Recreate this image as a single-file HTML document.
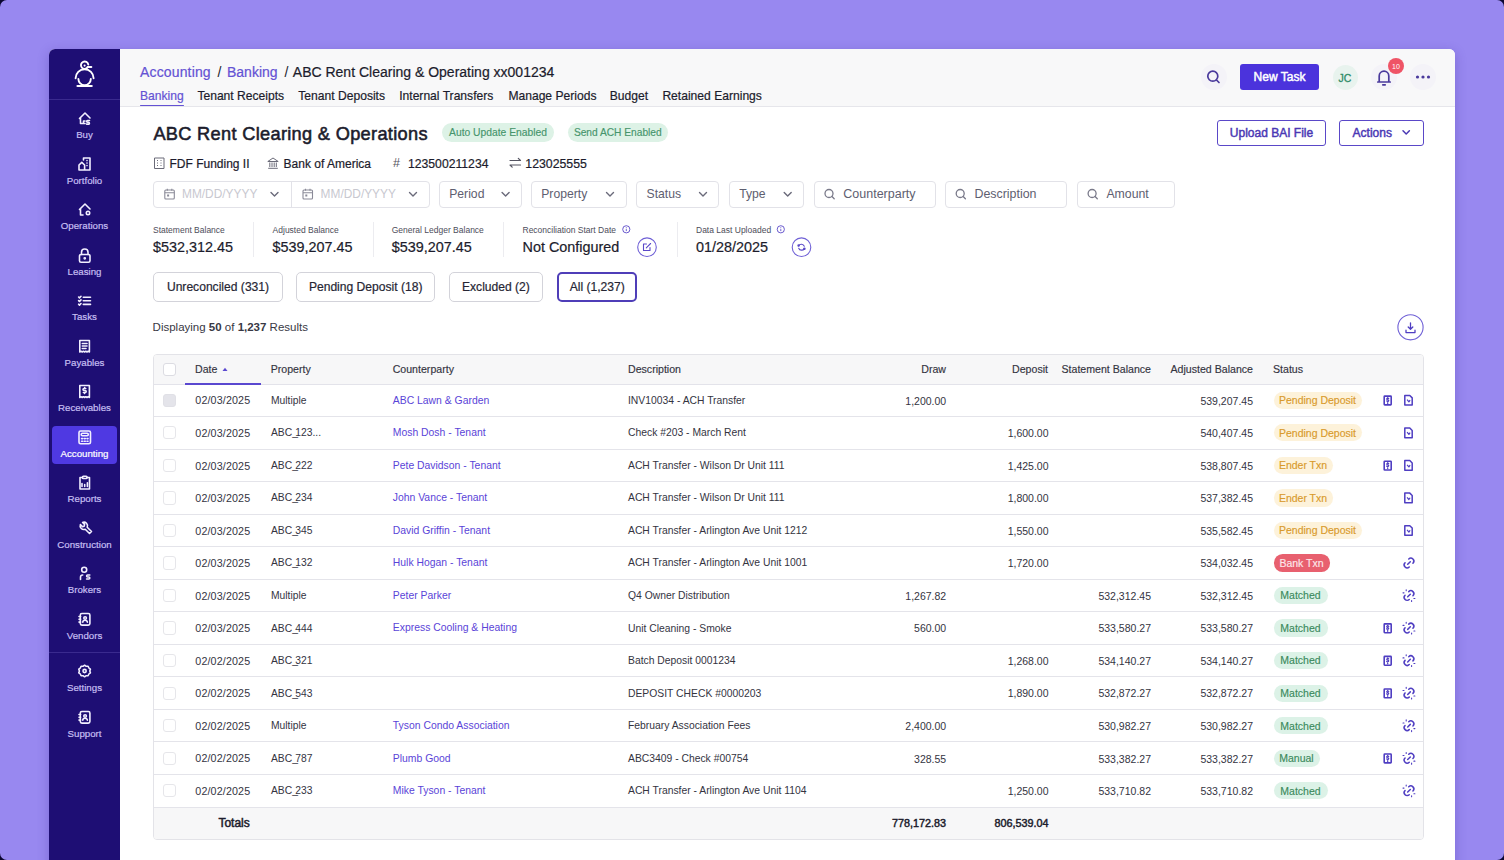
<!DOCTYPE html>
<html><head><meta charset="utf-8">
<style>
*{box-sizing:border-box;margin:0;padding:0}
html,body{width:1504px;height:860px;overflow:hidden}
body{background:#0b0630;font-family:"Liberation Sans",sans-serif;position:relative}
.t{position:absolute;white-space:nowrap}
.r{position:absolute}
b{font-weight:700}
svg.ov{position:absolute;left:0;top:0}
</style></head><body>
<div class="r" style="left:0;top:0;width:1504px;height:860px;border-radius:7px;background:#9888f0"></div>
<div class="r" style="left:49.00px;top:49.00px;width:1406.00px;height:831.00px;background:#ffffff;border-radius:6px;box-shadow:0 3px 12px rgba(50,30,140,.28);overflow:hidden"></div>
<div class="r" style="left:49.00px;top:49.00px;width:71.00px;height:811.00px;background:#1e0e74;border-top-left-radius:6px"></div>
<div class="r" style="left:49.00px;top:99.00px;width:71.00px;height:1.00px;background:#3a2a8e;"></div>
<div class="r" style="left:49.00px;top:652.00px;width:71.00px;height:1.00px;background:#3a2a8e;"></div>
<div class="r" style="left:120.00px;top:49.00px;width:1335.00px;height:57.00px;background:#f8f8f9;border-top-right-radius:6px"></div>
<div class="r" style="left:120.00px;top:106.00px;width:1335.00px;height:1.00px;background:#e6e6eb;"></div>
<div class="t" style="left:-215.50px;width:600px;text-align:center;top:130.29px;font-size:9.7px;line-height:9.7px;color:#c6bff2;-webkit-text-stroke:0.2px #c6bff2;">Buy</div>
<div class="t" style="left:-215.50px;width:600px;text-align:center;top:175.79px;font-size:9.7px;line-height:9.7px;color:#c6bff2;-webkit-text-stroke:0.2px #c6bff2;">Portfolio</div>
<div class="t" style="left:-215.50px;width:600px;text-align:center;top:221.29px;font-size:9.7px;line-height:9.7px;color:#c6bff2;-webkit-text-stroke:0.2px #c6bff2;">Operations</div>
<div class="t" style="left:-215.50px;width:600px;text-align:center;top:266.79px;font-size:9.7px;line-height:9.7px;color:#c6bff2;-webkit-text-stroke:0.2px #c6bff2;">Leasing</div>
<div class="t" style="left:-215.50px;width:600px;text-align:center;top:312.29px;font-size:9.7px;line-height:9.7px;color:#c6bff2;-webkit-text-stroke:0.2px #c6bff2;">Tasks</div>
<div class="t" style="left:-215.50px;width:600px;text-align:center;top:357.79px;font-size:9.7px;line-height:9.7px;color:#c6bff2;-webkit-text-stroke:0.2px #c6bff2;">Payables</div>
<div class="t" style="left:-215.50px;width:600px;text-align:center;top:403.29px;font-size:9.7px;line-height:9.7px;color:#c6bff2;-webkit-text-stroke:0.2px #c6bff2;">Receivables</div>
<div class="r" style="left:52.00px;top:425.50px;width:65.00px;height:38.00px;background:#4f39e2;border-radius:4px;"></div>
<div class="t" style="left:-215.50px;width:600px;text-align:center;top:448.79px;font-size:9.7px;line-height:9.7px;color:#ffffff;-webkit-text-stroke:0.2px #ffffff;">Accounting</div>
<div class="t" style="left:-215.50px;width:600px;text-align:center;top:494.29px;font-size:9.7px;line-height:9.7px;color:#c6bff2;-webkit-text-stroke:0.2px #c6bff2;">Reports</div>
<div class="t" style="left:-215.50px;width:600px;text-align:center;top:539.79px;font-size:9.7px;line-height:9.7px;color:#c6bff2;-webkit-text-stroke:0.2px #c6bff2;">Construction</div>
<div class="t" style="left:-215.50px;width:600px;text-align:center;top:585.29px;font-size:9.7px;line-height:9.7px;color:#c6bff2;-webkit-text-stroke:0.2px #c6bff2;">Brokers</div>
<div class="t" style="left:-215.50px;width:600px;text-align:center;top:630.79px;font-size:9.7px;line-height:9.7px;color:#c6bff2;-webkit-text-stroke:0.2px #c6bff2;">Vendors</div>
<div class="t" style="left:-215.50px;width:600px;text-align:center;top:683.29px;font-size:9.7px;line-height:9.7px;color:#c6bff2;-webkit-text-stroke:0.2px #c6bff2;">Settings</div>
<div class="t" style="left:-215.50px;width:600px;text-align:center;top:729.29px;font-size:9.7px;line-height:9.7px;color:#c6bff2;-webkit-text-stroke:0.2px #c6bff2;">Support</div>
<div class="t" style="left:140.00px;top:65.15px;font-size:14px;line-height:14px;color:#6452d4;-webkit-text-stroke:0.2px #6452d4;letter-spacing:.15px">Accounting</div>
<div class="t" style="left:217.50px;top:65.15px;font-size:14px;line-height:14px;color:#1c1c2c;">/</div>
<div class="t" style="left:227.00px;top:65.15px;font-size:14px;line-height:14px;color:#6452d4;-webkit-text-stroke:0.2px #6452d4;">Banking</div>
<div class="t" style="left:284.50px;top:65.15px;font-size:14px;line-height:14px;color:#1c1c2c;">/</div>
<div class="t" style="left:292.80px;top:65.15px;font-size:14px;line-height:14px;color:#1c1c2c;-webkit-text-stroke:0.2px #1c1c2c;">ABC Rent Clearing &amp; Operating xx001234</div>
<div class="t" style="left:140.00px;top:89.86px;font-size:12.1px;line-height:12.1px;color:#6452d4;-webkit-text-stroke:0.2px #6452d4;">Banking</div>
<div class="t" style="left:197.40px;top:89.86px;font-size:12.1px;line-height:12.1px;color:#1c1c2c;-webkit-text-stroke:0.2px #1c1c2c;">Tenant Receipts</div>
<div class="t" style="left:298.30px;top:89.86px;font-size:12.1px;line-height:12.1px;color:#1c1c2c;-webkit-text-stroke:0.2px #1c1c2c;">Tenant Deposits</div>
<div class="t" style="left:399.20px;top:89.86px;font-size:12.1px;line-height:12.1px;color:#1c1c2c;-webkit-text-stroke:0.2px #1c1c2c;">Internal Transfers</div>
<div class="t" style="left:508.40px;top:89.86px;font-size:12.1px;line-height:12.1px;color:#1c1c2c;-webkit-text-stroke:0.2px #1c1c2c;">Manage Periods</div>
<div class="t" style="left:609.80px;top:89.86px;font-size:12.1px;line-height:12.1px;color:#1c1c2c;-webkit-text-stroke:0.2px #1c1c2c;">Budget</div>
<div class="t" style="left:662.40px;top:89.86px;font-size:12.1px;line-height:12.1px;color:#1c1c2c;-webkit-text-stroke:0.2px #1c1c2c;">Retained Earnings</div>
<div class="r" style="left:140.00px;top:104.60px;width:44.00px;height:1.80px;background:#6452d4;border-radius:1px;"></div>
<div class="r" style="left:1201.00px;top:64.00px;width:26.00px;height:26.00px;background:#f4f3f8;border-radius:13px;"></div>
<div class="r" style="left:1240.00px;top:64.00px;width:79.00px;height:26.00px;background:#4b33dc;border-radius:3px;"></div>
<div class="t" style="left:979.50px;width:600px;text-align:center;top:71.34px;font-size:12px;line-height:12px;color:#fff;-webkit-text-stroke:0.45px #fff;">New Task</div>
<div class="r" style="left:1332.50px;top:65.00px;width:25.00px;height:25.00px;background:#e8f3ee;border-radius:13px;"></div>
<div class="t" style="left:1045.00px;width:600px;text-align:center;top:72.61px;font-size:10.5px;line-height:10.5px;color:#2f8c68;-webkit-text-stroke:0.3px #2f8c68;">JC</div>
<div class="r" style="left:1371.00px;top:64.00px;width:26.00px;height:26.00px;background:#f4f3f8;border-radius:13px;"></div>
<div class="r" style="left:1388.00px;top:58.00px;width:16.00px;height:16.00px;background:#ef5466;border-radius:8px;"></div>
<div class="t" style="left:1096.00px;width:600px;text-align:center;top:62.57px;font-size:7px;line-height:7px;color:#fff;">10</div>
<div class="r" style="left:1410.00px;top:64.00px;width:26.00px;height:26.00px;background:#f4f3f8;border-radius:13px;"></div>
<div class="t" style="left:153.40px;top:124.79px;font-size:18.2px;line-height:18.2px;color:#1c1c2c;letter-spacing:0.32px;-webkit-text-stroke:0.55px #1c1c2c;">ABC Rent Clearing &amp; Operations</div>
<div class="r" style="left:442.00px;top:123.00px;width:112.00px;height:19.00px;background:#ddf2e6;border-radius:9.5px;"></div>
<div class="t" style="left:198.00px;width:600px;text-align:center;top:127.78px;font-size:10.3px;line-height:10.3px;color:#46956c;-webkit-text-stroke:0.15px #46956c;">Auto Update Enabled</div>
<div class="r" style="left:567.50px;top:123.00px;width:100.50px;height:19.00px;background:#ddf2e6;border-radius:9.5px;"></div>
<div class="t" style="left:317.80px;width:600px;text-align:center;top:127.87px;font-size:10.2px;line-height:10.2px;color:#46956c;-webkit-text-stroke:0.15px #46956c;">Send ACH Enabled</div>
<div class="r" style="left:1217.00px;top:119.50px;width:109.00px;height:26.50px;background:#fff;border:1px solid #5a48c8;border-radius:3px;"></div>
<div class="t" style="left:971.50px;width:600px;text-align:center;top:126.64px;font-size:12px;line-height:12px;color:#4a38b4;-webkit-text-stroke:0.45px #4a38b4;">Upload BAI File</div>
<div class="r" style="left:1339.00px;top:119.50px;width:84.50px;height:26.50px;background:#fff;border:1px solid #5a48c8;border-radius:3px;"></div>
<div class="t" style="left:1352.60px;top:126.64px;font-size:12px;line-height:12px;color:#4a38b4;-webkit-text-stroke:0.45px #4a38b4;">Actions</div>
<div class="t" style="left:169.50px;top:157.84px;font-size:12px;line-height:12px;color:#1c1c2c;-webkit-text-stroke:0.2px #1c1c2c;">FDF Funding II</div>
<div class="t" style="left:283.60px;top:157.84px;font-size:12px;line-height:12px;color:#1c1c2c;-webkit-text-stroke:0.2px #1c1c2c;">Bank of America</div>
<div class="t" style="left:408.00px;top:157.67px;font-size:12.2px;line-height:12.2px;color:#1c1c2c;-webkit-text-stroke:0.2px #1c1c2c;">123500211234</div>
<div class="t" style="left:525.30px;top:157.59px;font-size:12.3px;line-height:12.3px;color:#1c1c2c;-webkit-text-stroke:0.2px #1c1c2c;">123025555</div>
<div class="t" style="left:393.00px;top:157.42px;font-size:12.5px;line-height:12.5px;color:#555562;">#</div>
<div class="r" style="left:153.00px;top:181.00px;width:276.50px;height:26.50px;background:#fff;border:1px solid #e2e2e8;border-radius:4px;"></div>
<div class="r" style="left:290.50px;top:181.00px;width:1.00px;height:26.50px;background:#e2e2e8;"></div>
<div class="t" style="left:182.00px;top:188.53px;font-size:11.9px;line-height:11.9px;color:#c8c8d0;">MM/DD/YYYY</div>
<div class="t" style="left:320.60px;top:188.53px;font-size:11.9px;line-height:11.9px;color:#c8c8d0;">MM/DD/YYYY</div>
<div class="r" style="left:439.00px;top:181.00px;width:82.60px;height:26.50px;background:#fff;border:1px solid #e2e2e8;border-radius:4px;"></div>
<div class="t" style="left:449.20px;top:188.27px;font-size:12.2px;line-height:12.2px;color:#5e5e70;">Period</div>
<div class="r" style="left:531.00px;top:181.00px;width:95.60px;height:26.50px;background:#fff;border:1px solid #e2e2e8;border-radius:4px;"></div>
<div class="t" style="left:541.20px;top:188.27px;font-size:12.2px;line-height:12.2px;color:#5e5e70;">Property</div>
<div class="r" style="left:636.30px;top:181.00px;width:83.20px;height:26.50px;background:#fff;border:1px solid #e2e2e8;border-radius:4px;"></div>
<div class="t" style="left:646.50px;top:188.27px;font-size:12.2px;line-height:12.2px;color:#5e5e70;">Status</div>
<div class="r" style="left:729.00px;top:181.00px;width:75.00px;height:26.50px;background:#fff;border:1px solid #e2e2e8;border-radius:4px;"></div>
<div class="t" style="left:739.20px;top:188.27px;font-size:12.2px;line-height:12.2px;color:#5e5e70;">Type</div>
<div class="r" style="left:813.80px;top:181.00px;width:122.00px;height:26.50px;background:#fff;border:1px solid #e2e2e8;border-radius:4px;"></div>
<div class="t" style="left:843.30px;top:188.02px;font-size:12.5px;line-height:12.5px;color:#5e5e70;">Counterparty</div>
<div class="r" style="left:945.00px;top:181.00px;width:122.40px;height:26.50px;background:#fff;border:1px solid #e2e2e8;border-radius:4px;"></div>
<div class="t" style="left:974.50px;top:188.10px;font-size:12.4px;line-height:12.4px;color:#5e5e70;">Description</div>
<div class="r" style="left:1076.90px;top:181.00px;width:98.00px;height:26.50px;background:#fff;border:1px solid #e2e2e8;border-radius:4px;"></div>
<div class="t" style="left:1106.40px;top:188.19px;font-size:12.3px;line-height:12.3px;color:#5e5e70;">Amount</div>
<div class="t" style="left:153.00px;top:225.90px;font-size:8.5px;line-height:8.5px;color:#4d4d5a;">Statement Balance</div>
<div class="t" style="left:153.00px;top:240.01px;font-size:14.4px;line-height:14.4px;color:#1c1c2c;-webkit-text-stroke:0.2px #1c1c2c;">$532,312.45</div>
<div class="t" style="left:272.60px;top:225.90px;font-size:8.5px;line-height:8.5px;color:#4d4d5a;">Adjusted Balance</div>
<div class="t" style="left:272.60px;top:240.01px;font-size:14.4px;line-height:14.4px;color:#1c1c2c;-webkit-text-stroke:0.2px #1c1c2c;">$539,207.45</div>
<div class="t" style="left:391.70px;top:225.90px;font-size:8.5px;line-height:8.5px;color:#4d4d5a;">General Ledger Balance</div>
<div class="t" style="left:391.70px;top:240.01px;font-size:14.4px;line-height:14.4px;color:#1c1c2c;-webkit-text-stroke:0.2px #1c1c2c;">$539,207.45</div>
<div class="t" style="left:522.50px;top:225.90px;font-size:8.5px;line-height:8.5px;color:#4d4d5a;">Reconciliation Start Date</div>
<div class="t" style="left:522.50px;top:240.01px;font-size:14.4px;line-height:14.4px;color:#1c1c2c;-webkit-text-stroke:0.2px #1c1c2c;">Not Configured</div>
<div class="t" style="left:696.00px;top:225.90px;font-size:8.5px;line-height:8.5px;color:#4d4d5a;">Data Last Uploaded</div>
<div class="t" style="left:696.00px;top:240.01px;font-size:14.4px;line-height:14.4px;color:#1c1c2c;-webkit-text-stroke:0.2px #1c1c2c;">01/28/2025</div>
<div class="r" style="left:253.00px;top:222.00px;width:1.00px;height:35.00px;background:#ececf0;"></div>
<div class="r" style="left:372.70px;top:222.00px;width:1.00px;height:35.00px;background:#ececf0;"></div>
<div class="r" style="left:503.00px;top:222.00px;width:1.00px;height:35.00px;background:#ececf0;"></div>
<div class="r" style="left:676.50px;top:222.00px;width:1.00px;height:35.00px;background:#ececf0;"></div>
<div class="r" style="left:153.00px;top:272.20px;width:130.00px;height:29.60px;background:#fff;border:1px solid #d3d3da;border-radius:5px;"></div>
<div class="t" style="left:-82.00px;width:600px;text-align:center;top:280.96px;font-size:12.1px;line-height:12.1px;color:#262634;-webkit-text-stroke:0.2px #262634;">Unreconciled (331)</div>
<div class="r" style="left:295.90px;top:272.20px;width:139.60px;height:29.60px;background:#fff;border:1px solid #d3d3da;border-radius:5px;"></div>
<div class="t" style="left:65.70px;width:600px;text-align:center;top:280.96px;font-size:12.1px;line-height:12.1px;color:#262634;-webkit-text-stroke:0.2px #262634;">Pending Deposit (18)</div>
<div class="r" style="left:448.50px;top:272.20px;width:94.90px;height:29.60px;background:#fff;border:1px solid #d3d3da;border-radius:5px;"></div>
<div class="t" style="left:195.95px;width:600px;text-align:center;top:280.96px;font-size:12.1px;line-height:12.1px;color:#262634;-webkit-text-stroke:0.2px #262634;">Excluded (2)</div>
<div class="r" style="left:557.40px;top:272.20px;width:79.60px;height:29.60px;background:#fff;border:2px solid #4f3eb8;border-radius:5px;"></div>
<div class="t" style="left:297.20px;width:600px;text-align:center;top:280.96px;font-size:12.1px;line-height:12.1px;color:#262634;-webkit-text-stroke:0.2px #262634;">All (1,237)</div>
<div class="t" style="left:152.60px;top:322.47px;font-size:11.5px;line-height:11.5px;color:#383844;">Displaying <b>50</b> of <b>1,237</b> Results</div>
<div class="r" style="left:153.00px;top:354.00px;width:1270.80px;height:485.50px;background:#fff;border:1px solid #e3e3e8;border-radius:4px;"></div>
<div class="r" style="left:154.00px;top:355.00px;width:1268.80px;height:29.00px;background:#f7f7f8;border-top-left-radius:3px;border-top-right-radius:3px"></div>
<div class="r" style="left:154.00px;top:384.00px;width:1268.80px;height:1.00px;background:#e3e3ea;"></div>
<div class="r" style="left:185.40px;top:382.50px;width:75.60px;height:2.00px;background:#5a48d0;"></div>
<div class="r" style="left:162.60px;top:362.80px;width:13.20px;height:13.20px;background:#fff;border:1px solid #dcdce2;border-radius:3px;"></div>
<div class="t" style="left:195.00px;top:364.03px;font-size:10.6px;line-height:10.6px;color:#34343f;-webkit-text-stroke:0.15px #34343f;">Date</div>
<div class="t" style="left:270.70px;top:364.03px;font-size:10.6px;line-height:10.6px;color:#34343f;-webkit-text-stroke:0.15px #34343f;">Property</div>
<div class="t" style="left:392.70px;top:364.03px;font-size:10.6px;line-height:10.6px;color:#34343f;-webkit-text-stroke:0.15px #34343f;">Counterparty</div>
<div class="t" style="left:628.00px;top:364.03px;font-size:10.6px;line-height:10.6px;color:#34343f;-webkit-text-stroke:0.15px #34343f;">Description</div>
<div class="t" style="left:346.00px;width:600px;text-align:right;top:364.03px;font-size:10.6px;line-height:10.6px;color:#34343f;-webkit-text-stroke:0.15px #34343f;">Draw</div>
<div class="t" style="left:448.00px;width:600px;text-align:right;top:364.03px;font-size:10.6px;line-height:10.6px;color:#34343f;-webkit-text-stroke:0.15px #34343f;">Deposit</div>
<div class="t" style="left:551.00px;width:600px;text-align:right;top:364.03px;font-size:10.6px;line-height:10.6px;color:#34343f;-webkit-text-stroke:0.15px #34343f;">Statement Balance</div>
<div class="t" style="left:653.00px;width:600px;text-align:right;top:364.03px;font-size:10.6px;line-height:10.6px;color:#34343f;-webkit-text-stroke:0.15px #34343f;">Adjusted Balance</div>
<div class="t" style="left:1273.00px;top:364.03px;font-size:10.6px;line-height:10.6px;color:#34343f;-webkit-text-stroke:0.15px #34343f;">Status</div>
<div class="r" style="left:154.00px;top:416.00px;width:1268.80px;height:1.00px;background:#e4e4ea;"></div>
<div class="r" style="left:162.60px;top:393.70px;width:13.20px;height:13.20px;background:#e4e4ea;border:1px solid #e0e0e6;border-radius:3px;"></div>
<div class="t" style="left:195.30px;top:395.44px;font-size:10.7px;line-height:10.7px;color:#34343f;letter-spacing:0.15px;">02/03/2025</div>
<div class="t" style="left:271.00px;top:395.78px;font-size:10.3px;line-height:10.3px;color:#34343f;">Multiple</div>
<div class="t" style="left:392.80px;top:395.70px;font-size:10.4px;line-height:10.4px;color:#5a44d8;">ABC Lawn &amp; Garden</div>
<div class="t" style="left:628.00px;top:395.74px;font-size:10.35px;line-height:10.35px;color:#34343f;">INV10034 - ACH Transfer</div>
<div class="t" style="left:346.20px;width:600px;text-align:right;top:395.61px;font-size:10.5px;line-height:10.5px;color:#34343f;">1,200.00</div>
<div class="t" style="left:653.00px;width:600px;text-align:right;top:395.61px;font-size:10.5px;line-height:10.5px;color:#34343f;">539,207.45</div>
<div class="r" style="left:1273.50px;top:391.70px;width:88.00px;height:17.20px;background:#fdf2da;border-radius:8.6px;"></div>
<div class="t" style="left:1017.50px;width:600px;text-align:center;top:395.11px;font-size:10.5px;line-height:10.5px;color:#d99a2b;-webkit-text-stroke:0.15px #d99a2b;">Pending Deposit</div>
<div class="r" style="left:154.00px;top:448.54px;width:1268.80px;height:1.00px;background:#e4e4ea;"></div>
<div class="r" style="left:162.60px;top:426.24px;width:13.20px;height:13.20px;background:#fff;border:1px solid #e6e6ea;border-radius:3px;"></div>
<div class="t" style="left:195.30px;top:427.98px;font-size:10.7px;line-height:10.7px;color:#34343f;letter-spacing:0.15px;">02/03/2025</div>
<div class="t" style="left:271.00px;top:428.32px;font-size:10.3px;line-height:10.3px;color:#34343f;">ABC<span style="letter-spacing:-2.6px">_</span>123...</div>
<div class="t" style="left:392.80px;top:428.24px;font-size:10.4px;line-height:10.4px;color:#5a44d8;">Mosh Dosh - Tenant</div>
<div class="t" style="left:628.00px;top:428.28px;font-size:10.35px;line-height:10.35px;color:#34343f;">Check #203 - March Rent</div>
<div class="t" style="left:448.50px;width:600px;text-align:right;top:428.15px;font-size:10.5px;line-height:10.5px;color:#34343f;">1,600.00</div>
<div class="t" style="left:653.00px;width:600px;text-align:right;top:428.15px;font-size:10.5px;line-height:10.5px;color:#34343f;">540,407.45</div>
<div class="r" style="left:1273.50px;top:424.24px;width:88.00px;height:17.20px;background:#fdf2da;border-radius:8.6px;"></div>
<div class="t" style="left:1017.50px;width:600px;text-align:center;top:427.65px;font-size:10.5px;line-height:10.5px;color:#d99a2b;-webkit-text-stroke:0.15px #d99a2b;">Pending Deposit</div>
<div class="r" style="left:154.00px;top:481.08px;width:1268.80px;height:1.00px;background:#e4e4ea;"></div>
<div class="r" style="left:162.60px;top:458.78px;width:13.20px;height:13.20px;background:#fff;border:1px solid #e6e6ea;border-radius:3px;"></div>
<div class="t" style="left:195.30px;top:460.52px;font-size:10.7px;line-height:10.7px;color:#34343f;letter-spacing:0.15px;">02/03/2025</div>
<div class="t" style="left:271.00px;top:460.86px;font-size:10.3px;line-height:10.3px;color:#34343f;">ABC<span style="letter-spacing:-2.6px">_</span>222</div>
<div class="t" style="left:392.80px;top:460.78px;font-size:10.4px;line-height:10.4px;color:#5a44d8;">Pete Davidson - Tenant</div>
<div class="t" style="left:628.00px;top:460.82px;font-size:10.35px;line-height:10.35px;color:#34343f;">ACH Transfer - Wilson Dr Unit 111</div>
<div class="t" style="left:448.50px;width:600px;text-align:right;top:460.69px;font-size:10.5px;line-height:10.5px;color:#34343f;">1,425.00</div>
<div class="t" style="left:653.00px;width:600px;text-align:right;top:460.69px;font-size:10.5px;line-height:10.5px;color:#34343f;">538,807.45</div>
<div class="r" style="left:1273.50px;top:456.78px;width:59.00px;height:17.20px;background:#fdf2da;border-radius:8.6px;"></div>
<div class="t" style="left:1003.00px;width:600px;text-align:center;top:460.19px;font-size:10.5px;line-height:10.5px;color:#d99a2b;-webkit-text-stroke:0.15px #d99a2b;">Ender Txn</div>
<div class="r" style="left:154.00px;top:513.62px;width:1268.80px;height:1.00px;background:#e4e4ea;"></div>
<div class="r" style="left:162.60px;top:491.32px;width:13.20px;height:13.20px;background:#fff;border:1px solid #e6e6ea;border-radius:3px;"></div>
<div class="t" style="left:195.30px;top:493.06px;font-size:10.7px;line-height:10.7px;color:#34343f;letter-spacing:0.15px;">02/03/2025</div>
<div class="t" style="left:271.00px;top:493.40px;font-size:10.3px;line-height:10.3px;color:#34343f;">ABC<span style="letter-spacing:-2.6px">_</span>234</div>
<div class="t" style="left:392.80px;top:493.32px;font-size:10.4px;line-height:10.4px;color:#5a44d8;">John Vance - Tenant</div>
<div class="t" style="left:628.00px;top:493.36px;font-size:10.35px;line-height:10.35px;color:#34343f;">ACH Transfer - Wilson Dr Unit 111</div>
<div class="t" style="left:448.50px;width:600px;text-align:right;top:493.23px;font-size:10.5px;line-height:10.5px;color:#34343f;">1,800.00</div>
<div class="t" style="left:653.00px;width:600px;text-align:right;top:493.23px;font-size:10.5px;line-height:10.5px;color:#34343f;">537,382.45</div>
<div class="r" style="left:1273.50px;top:489.32px;width:59.00px;height:17.20px;background:#fdf2da;border-radius:8.6px;"></div>
<div class="t" style="left:1003.00px;width:600px;text-align:center;top:492.73px;font-size:10.5px;line-height:10.5px;color:#d99a2b;-webkit-text-stroke:0.15px #d99a2b;">Ender Txn</div>
<div class="r" style="left:154.00px;top:546.16px;width:1268.80px;height:1.00px;background:#e4e4ea;"></div>
<div class="r" style="left:162.60px;top:523.86px;width:13.20px;height:13.20px;background:#fff;border:1px solid #e6e6ea;border-radius:3px;"></div>
<div class="t" style="left:195.30px;top:525.60px;font-size:10.7px;line-height:10.7px;color:#34343f;letter-spacing:0.15px;">02/03/2025</div>
<div class="t" style="left:271.00px;top:525.94px;font-size:10.3px;line-height:10.3px;color:#34343f;">ABC<span style="letter-spacing:-2.6px">_</span>345</div>
<div class="t" style="left:392.80px;top:525.86px;font-size:10.4px;line-height:10.4px;color:#5a44d8;">David Griffin - Tenant</div>
<div class="t" style="left:628.00px;top:525.90px;font-size:10.35px;line-height:10.35px;color:#34343f;">ACH Transfer - Arlington Ave Unit 1212</div>
<div class="t" style="left:448.50px;width:600px;text-align:right;top:525.77px;font-size:10.5px;line-height:10.5px;color:#34343f;">1,550.00</div>
<div class="t" style="left:653.00px;width:600px;text-align:right;top:525.77px;font-size:10.5px;line-height:10.5px;color:#34343f;">535,582.45</div>
<div class="r" style="left:1273.50px;top:521.86px;width:88.00px;height:17.20px;background:#fdf2da;border-radius:8.6px;"></div>
<div class="t" style="left:1017.50px;width:600px;text-align:center;top:525.27px;font-size:10.5px;line-height:10.5px;color:#d99a2b;-webkit-text-stroke:0.15px #d99a2b;">Pending Deposit</div>
<div class="r" style="left:154.00px;top:578.70px;width:1268.80px;height:1.00px;background:#e4e4ea;"></div>
<div class="r" style="left:162.60px;top:556.40px;width:13.20px;height:13.20px;background:#fff;border:1px solid #e6e6ea;border-radius:3px;"></div>
<div class="t" style="left:195.30px;top:558.14px;font-size:10.7px;line-height:10.7px;color:#34343f;letter-spacing:0.15px;">02/03/2025</div>
<div class="t" style="left:271.00px;top:558.48px;font-size:10.3px;line-height:10.3px;color:#34343f;">ABC<span style="letter-spacing:-2.6px">_</span>132</div>
<div class="t" style="left:392.80px;top:558.40px;font-size:10.4px;line-height:10.4px;color:#5a44d8;">Hulk Hogan - Tenant</div>
<div class="t" style="left:628.00px;top:558.44px;font-size:10.35px;line-height:10.35px;color:#34343f;">ACH Transfer - Arlington Ave Unit 1001</div>
<div class="t" style="left:448.50px;width:600px;text-align:right;top:558.31px;font-size:10.5px;line-height:10.5px;color:#34343f;">1,720.00</div>
<div class="t" style="left:653.00px;width:600px;text-align:right;top:558.31px;font-size:10.5px;line-height:10.5px;color:#34343f;">534,032.45</div>
<div class="r" style="left:1273.50px;top:554.40px;width:56.00px;height:17.20px;background:#e8606f;border-radius:8.6px;"></div>
<div class="t" style="left:1001.50px;width:600px;text-align:center;top:557.81px;font-size:10.5px;line-height:10.5px;color:#fde8ea;-webkit-text-stroke:0.15px #fde8ea;">Bank Txn</div>
<div class="r" style="left:154.00px;top:611.24px;width:1268.80px;height:1.00px;background:#e4e4ea;"></div>
<div class="r" style="left:162.60px;top:588.94px;width:13.20px;height:13.20px;background:#fff;border:1px solid #e6e6ea;border-radius:3px;"></div>
<div class="t" style="left:195.30px;top:590.68px;font-size:10.7px;line-height:10.7px;color:#34343f;letter-spacing:0.15px;">02/03/2025</div>
<div class="t" style="left:271.00px;top:591.02px;font-size:10.3px;line-height:10.3px;color:#34343f;">Multiple</div>
<div class="t" style="left:392.80px;top:590.94px;font-size:10.4px;line-height:10.4px;color:#5a44d8;">Peter Parker</div>
<div class="t" style="left:628.00px;top:590.98px;font-size:10.35px;line-height:10.35px;color:#34343f;">Q4 Owner Distribution</div>
<div class="t" style="left:346.20px;width:600px;text-align:right;top:590.85px;font-size:10.5px;line-height:10.5px;color:#34343f;">1,267.82</div>
<div class="t" style="left:551.00px;width:600px;text-align:right;top:590.85px;font-size:10.5px;line-height:10.5px;color:#34343f;">532,312.45</div>
<div class="t" style="left:653.00px;width:600px;text-align:right;top:590.85px;font-size:10.5px;line-height:10.5px;color:#34343f;">532,312.45</div>
<div class="r" style="left:1273.50px;top:586.94px;width:54.00px;height:17.20px;background:#dcf2e7;border-radius:8.6px;"></div>
<div class="t" style="left:1000.50px;width:600px;text-align:center;top:590.35px;font-size:10.5px;line-height:10.5px;color:#3b8a5d;-webkit-text-stroke:0.15px #3b8a5d;">Matched</div>
<div class="r" style="left:154.00px;top:643.78px;width:1268.80px;height:1.00px;background:#e4e4ea;"></div>
<div class="r" style="left:162.60px;top:621.48px;width:13.20px;height:13.20px;background:#fff;border:1px solid #e6e6ea;border-radius:3px;"></div>
<div class="t" style="left:195.30px;top:623.22px;font-size:10.7px;line-height:10.7px;color:#34343f;letter-spacing:0.15px;">02/03/2025</div>
<div class="t" style="left:271.00px;top:623.56px;font-size:10.3px;line-height:10.3px;color:#34343f;">ABC<span style="letter-spacing:-2.6px">_</span>444</div>
<div class="t" style="left:392.80px;top:623.48px;font-size:10.4px;line-height:10.4px;color:#5a44d8;">Express Cooling &amp; Heating</div>
<div class="t" style="left:628.00px;top:623.52px;font-size:10.35px;line-height:10.35px;color:#34343f;">Unit Cleaning - Smoke</div>
<div class="t" style="left:346.20px;width:600px;text-align:right;top:623.39px;font-size:10.5px;line-height:10.5px;color:#34343f;">560.00</div>
<div class="t" style="left:551.00px;width:600px;text-align:right;top:623.39px;font-size:10.5px;line-height:10.5px;color:#34343f;">533,580.27</div>
<div class="t" style="left:653.00px;width:600px;text-align:right;top:623.39px;font-size:10.5px;line-height:10.5px;color:#34343f;">533,580.27</div>
<div class="r" style="left:1273.50px;top:619.48px;width:54.00px;height:17.20px;background:#dcf2e7;border-radius:8.6px;"></div>
<div class="t" style="left:1000.50px;width:600px;text-align:center;top:622.89px;font-size:10.5px;line-height:10.5px;color:#3b8a5d;-webkit-text-stroke:0.15px #3b8a5d;">Matched</div>
<div class="r" style="left:154.00px;top:676.32px;width:1268.80px;height:1.00px;background:#e4e4ea;"></div>
<div class="r" style="left:162.60px;top:654.02px;width:13.20px;height:13.20px;background:#fff;border:1px solid #e6e6ea;border-radius:3px;"></div>
<div class="t" style="left:195.30px;top:655.76px;font-size:10.7px;line-height:10.7px;color:#34343f;letter-spacing:0.15px;">02/02/2025</div>
<div class="t" style="left:271.00px;top:656.10px;font-size:10.3px;line-height:10.3px;color:#34343f;">ABC<span style="letter-spacing:-2.6px">_</span>321</div>
<div class="t" style="left:628.00px;top:656.06px;font-size:10.35px;line-height:10.35px;color:#34343f;">Batch Deposit 0001234</div>
<div class="t" style="left:448.50px;width:600px;text-align:right;top:655.93px;font-size:10.5px;line-height:10.5px;color:#34343f;">1,268.00</div>
<div class="t" style="left:551.00px;width:600px;text-align:right;top:655.93px;font-size:10.5px;line-height:10.5px;color:#34343f;">534,140.27</div>
<div class="t" style="left:653.00px;width:600px;text-align:right;top:655.93px;font-size:10.5px;line-height:10.5px;color:#34343f;">534,140.27</div>
<div class="r" style="left:1273.50px;top:652.02px;width:54.00px;height:17.20px;background:#dcf2e7;border-radius:8.6px;"></div>
<div class="t" style="left:1000.50px;width:600px;text-align:center;top:655.43px;font-size:10.5px;line-height:10.5px;color:#3b8a5d;-webkit-text-stroke:0.15px #3b8a5d;">Matched</div>
<div class="r" style="left:154.00px;top:708.86px;width:1268.80px;height:1.00px;background:#e4e4ea;"></div>
<div class="r" style="left:162.60px;top:686.56px;width:13.20px;height:13.20px;background:#fff;border:1px solid #e6e6ea;border-radius:3px;"></div>
<div class="t" style="left:195.30px;top:688.30px;font-size:10.7px;line-height:10.7px;color:#34343f;letter-spacing:0.15px;">02/02/2025</div>
<div class="t" style="left:271.00px;top:688.64px;font-size:10.3px;line-height:10.3px;color:#34343f;">ABC<span style="letter-spacing:-2.6px">_</span>543</div>
<div class="t" style="left:628.00px;top:688.60px;font-size:10.35px;line-height:10.35px;color:#34343f;">DEPOSIT CHECK #0000203</div>
<div class="t" style="left:448.50px;width:600px;text-align:right;top:688.47px;font-size:10.5px;line-height:10.5px;color:#34343f;">1,890.00</div>
<div class="t" style="left:551.00px;width:600px;text-align:right;top:688.47px;font-size:10.5px;line-height:10.5px;color:#34343f;">532,872.27</div>
<div class="t" style="left:653.00px;width:600px;text-align:right;top:688.47px;font-size:10.5px;line-height:10.5px;color:#34343f;">532,872.27</div>
<div class="r" style="left:1273.50px;top:684.56px;width:54.00px;height:17.20px;background:#dcf2e7;border-radius:8.6px;"></div>
<div class="t" style="left:1000.50px;width:600px;text-align:center;top:687.97px;font-size:10.5px;line-height:10.5px;color:#3b8a5d;-webkit-text-stroke:0.15px #3b8a5d;">Matched</div>
<div class="r" style="left:154.00px;top:741.40px;width:1268.80px;height:1.00px;background:#e4e4ea;"></div>
<div class="r" style="left:162.60px;top:719.10px;width:13.20px;height:13.20px;background:#fff;border:1px solid #e6e6ea;border-radius:3px;"></div>
<div class="t" style="left:195.30px;top:720.84px;font-size:10.7px;line-height:10.7px;color:#34343f;letter-spacing:0.15px;">02/02/2025</div>
<div class="t" style="left:271.00px;top:721.18px;font-size:10.3px;line-height:10.3px;color:#34343f;">Multiple</div>
<div class="t" style="left:392.80px;top:721.10px;font-size:10.4px;line-height:10.4px;color:#5a44d8;">Tyson Condo Association</div>
<div class="t" style="left:628.00px;top:721.14px;font-size:10.35px;line-height:10.35px;color:#34343f;">February Association Fees</div>
<div class="t" style="left:346.20px;width:600px;text-align:right;top:721.01px;font-size:10.5px;line-height:10.5px;color:#34343f;">2,400.00</div>
<div class="t" style="left:551.00px;width:600px;text-align:right;top:721.01px;font-size:10.5px;line-height:10.5px;color:#34343f;">530,982.27</div>
<div class="t" style="left:653.00px;width:600px;text-align:right;top:721.01px;font-size:10.5px;line-height:10.5px;color:#34343f;">530,982.27</div>
<div class="r" style="left:1273.50px;top:717.10px;width:54.00px;height:17.20px;background:#dcf2e7;border-radius:8.6px;"></div>
<div class="t" style="left:1000.50px;width:600px;text-align:center;top:720.51px;font-size:10.5px;line-height:10.5px;color:#3b8a5d;-webkit-text-stroke:0.15px #3b8a5d;">Matched</div>
<div class="r" style="left:154.00px;top:773.94px;width:1268.80px;height:1.00px;background:#e4e4ea;"></div>
<div class="r" style="left:162.60px;top:751.64px;width:13.20px;height:13.20px;background:#fff;border:1px solid #e6e6ea;border-radius:3px;"></div>
<div class="t" style="left:195.30px;top:753.38px;font-size:10.7px;line-height:10.7px;color:#34343f;letter-spacing:0.15px;">02/02/2025</div>
<div class="t" style="left:271.00px;top:753.72px;font-size:10.3px;line-height:10.3px;color:#34343f;">ABC<span style="letter-spacing:-2.6px">_</span>787</div>
<div class="t" style="left:392.80px;top:753.64px;font-size:10.4px;line-height:10.4px;color:#5a44d8;">Plumb Good</div>
<div class="t" style="left:628.00px;top:753.68px;font-size:10.35px;line-height:10.35px;color:#34343f;">ABC3409 - Check #00754</div>
<div class="t" style="left:346.20px;width:600px;text-align:right;top:753.55px;font-size:10.5px;line-height:10.5px;color:#34343f;">328.55</div>
<div class="t" style="left:551.00px;width:600px;text-align:right;top:753.55px;font-size:10.5px;line-height:10.5px;color:#34343f;">533,382.27</div>
<div class="t" style="left:653.00px;width:600px;text-align:right;top:753.55px;font-size:10.5px;line-height:10.5px;color:#34343f;">533,382.27</div>
<div class="r" style="left:1273.50px;top:749.64px;width:46.00px;height:17.20px;background:#dcf2e7;border-radius:8.6px;"></div>
<div class="t" style="left:996.50px;width:600px;text-align:center;top:753.05px;font-size:10.5px;line-height:10.5px;color:#3b8a5d;-webkit-text-stroke:0.15px #3b8a5d;">Manual</div>
<div class="r" style="left:162.60px;top:784.18px;width:13.20px;height:13.20px;background:#fff;border:1px solid #e6e6ea;border-radius:3px;"></div>
<div class="t" style="left:195.30px;top:785.92px;font-size:10.7px;line-height:10.7px;color:#34343f;letter-spacing:0.15px;">02/02/2025</div>
<div class="t" style="left:271.00px;top:786.26px;font-size:10.3px;line-height:10.3px;color:#34343f;">ABC<span style="letter-spacing:-2.6px">_</span>233</div>
<div class="t" style="left:392.80px;top:786.18px;font-size:10.4px;line-height:10.4px;color:#5a44d8;">Mike Tyson - Tenant</div>
<div class="t" style="left:628.00px;top:786.22px;font-size:10.35px;line-height:10.35px;color:#34343f;">ACH Transfer - Arlington Ave Unit 1104</div>
<div class="t" style="left:448.50px;width:600px;text-align:right;top:786.09px;font-size:10.5px;line-height:10.5px;color:#34343f;">1,250.00</div>
<div class="t" style="left:551.00px;width:600px;text-align:right;top:786.09px;font-size:10.5px;line-height:10.5px;color:#34343f;">533,710.82</div>
<div class="t" style="left:653.00px;width:600px;text-align:right;top:786.09px;font-size:10.5px;line-height:10.5px;color:#34343f;">533,710.82</div>
<div class="r" style="left:1273.50px;top:782.18px;width:54.00px;height:17.20px;background:#dcf2e7;border-radius:8.6px;"></div>
<div class="t" style="left:1000.50px;width:600px;text-align:center;top:785.59px;font-size:10.5px;line-height:10.5px;color:#3b8a5d;-webkit-text-stroke:0.15px #3b8a5d;">Matched</div>
<div class="r" style="left:154.00px;top:807.00px;width:1268.80px;height:32.00px;background:#f7f7f8;border-bottom-left-radius:3px;border-bottom-right-radius:3px"></div>
<div class="r" style="left:154.00px;top:806.50px;width:1268.80px;height:1.00px;background:#e4e4ea;"></div>
<div class="t" style="left:218.40px;top:817.14px;font-size:12px;line-height:12px;color:#1c1c2c;-webkit-text-stroke:0.5px #1c1c2c;">Totals</div>
<div class="t" style="left:346.00px;width:600px;text-align:right;top:818.06px;font-size:10.8px;line-height:10.8px;color:#1c1c2c;-webkit-text-stroke:0.45px #1c1c2c;">778,172.83</div>
<div class="t" style="left:448.50px;width:600px;text-align:right;top:818.06px;font-size:10.8px;line-height:10.8px;color:#1c1c2c;-webkit-text-stroke:0.45px #1c1c2c;">806,539.04</div>
<svg class="ov" width="1504" height="860" viewBox="0 0 1504 860"><g fill="none" stroke="#fff" stroke-width="1.9" stroke-linecap="round"><path d="M87.6 67.4 A3.7 3.7 0 1 1 88.3 64.6"/><path d="M87.6 67.1 H91.3" stroke-width="2"/><path d="M75.6 78.2 A9 9 0 0 1 93.6 78.2"/><path d="M78.4 79 A6.2 6.2 0 0 0 90.8 79"/><path d="M77.5 86 H91.7" stroke-width="2.2"/></g><circle cx="84.6" cy="65.6" r="1.05" fill="#fff"/>
<g fill="none" stroke="#f2efff" stroke-width="1.6" stroke-linecap="round" stroke-linejoin="round"><path d="M79.5 118.5 L85 113 L90 118"/><path d="M80.5 118 V123.5 H83"/><path d="M85 121 h-1.5 v2.5 h1.5"/><path d="M89.5 120.5 h-2 a0.9 0.9 0 0 0 0 1.8 h1 a0.9 0.9 0 0 1 0 1.8 h-2"/><path d="M83.5 160 V158 H90 V170 H79 V165 L81.8 162.3 L84.6 165 V170"/><path d="M87 160.5v.1M87 163v.1M87 165.5v.1"/><path d="M79.5 209.5 L85 204 L90 209"/><path d="M80.5 209 V215 H83"/><circle cx="88" cy="213" r="1.7"/><rect x="79.5" y="254.5" width="10.5" height="7.7" rx="1.5"/><path d="M81.5 254.5 V252.3 a3.25 3.25 0 0 1 6.5 0 V254.5"/><circle cx="84.75" cy="258.3" r=".6" fill="#f2efff"/><path d="M78.6 297 l.9 .9 1.5-1.6M78.6 300.6 l.9 .9 1.5-1.6M78.6 304.2 l.9 .9 1.5-1.6"/><path d="M83.3 297.2 H90.5M83.3 300.8 H90.5M83.3 304.4 H90.5"/><path d="M79.8 352 V340.5 H89.4 V352 l-1.2 -.8 -1.2 .8 -1.2 -.8 -1.2 .8 -1.2 -.8 -1.2 .8 -1.2 -.8 z"/><path d="M82.3 343.5 H87M82.3 346 H87M82.3 348.5 H86"/><path d="M79.8 397.5 V385.5 H89.4 V397.5 l-1.2 -.8 -1.2 .8 -1.2 -.8 -1.2 .8 -1.2 -.8 -1.2 .8 -1.2 -.8 z"/><path d="M85.8 388.5 h-1.8 a1 1 0 0 0 0 2 h1.2 a1 1 0 0 1 0 2 h-1.8M84.6 387.5v1M84.6 392.5v1"/><rect x="79" y="431" width="11.5" height="12.8" rx="1.6"/><rect x="81.2" y="433.2" width="7.1" height="2.6" rx="1.2"/><path d="M81.6 438.6h1M84.3 438.6h1M87 438.6h1M81.6 441.2h1M84.3 441.2h1M87 441.2h1"/><path d="M82.5 477.5 H80 V489 H89.5 V477.5 H87"/><rect x="82.5" y="476.3" width="4.5" height="2.2" rx=".8"/><path d="M82 486.5 V483.5M84.7 486.5 V484.5M87.4 486.5 V482.8"/><path d="M89.5 533.5 L85.2 529.2 a3.6 3.6 0 0 1 -4.8 -4.6 l2 2 1.8 -.4 .4 -1.8 -2 -2 a3.6 3.6 0 0 1 4.6 4.8 l4.3 4.3 z"/><circle cx="84.2" cy="569.8" r="2.5"/><path d="M80.5 579.5 V577.2 a2.2 2.2 0 0 1 2.2 -2.2"/><path d="M89.8 575 h-2.2 a1 1 0 0 0 0 2 h1.2 a1 1 0 0 1 0 2 h-2.2"/><rect x="80.3" y="613.5" width="9.6" height="11.6" rx="1.6"/><path d="M79 616.5h1.6M79 619.3h1.6M79 622.1h1.6"/><circle cx="85.1" cy="618" r="1.3"/><path d="M82.8 622.3 a2.3 2 0 0 1 4.6 0"/><path d="M84.6 665.2 l1.6 1.1 1.9 -.1 .8 1.8 1.5 1.2 -.6 1.8 .6 1.8 -1.5 1.2 -.8 1.8 -1.9 -.1 -1.6 1.1 -1.6 -1.1 -1.9 .1 -.8 -1.8 -1.5 -1.2 .6 -1.8 -.6 -1.8 1.5 -1.2 .8 -1.8 1.9 .1 z"/><circle cx="84.6" cy="671" r="1.6"/><rect x="80.3" y="711.5" width="9.6" height="11.6" rx="1.6"/><path d="M79 714.5h1.6M79 717.3h1.6M79 720.1h1.6"/><circle cx="85.1" cy="716" r="1.3"/><path d="M82.8 720.3 a2.3 2 0 0 1 4.6 0"/></g>
<g fill="none" stroke="#4a3a9c" stroke-width="1.7" stroke-linecap="round"><circle cx="1212.8" cy="76.2" r="5"/><path d="M1216.5 80 L1219 82.5"/></g>
<g fill="none" stroke="#4a3a9c" stroke-width="1.7" stroke-linejoin="round" stroke-linecap="round"><path d="M1379.2 82 V76 a4.8 4.8 0 0 1 9.6 0 V82 Z M1377.8 82 H1390.2"/><path d="M1382.8 84.8 H1385.2"/></g>
<g fill="#4a3a9c"><circle cx="1417.5" cy="77" r="1.6"/><circle cx="1423" cy="77" r="1.6"/><circle cx="1428.5" cy="77" r="1.6"/></g>
<path d="M1403 130.8 l3.2 3.2 3.2 -3.2" fill="none" stroke="#4a38b4" stroke-width="1.5" stroke-linecap="round" stroke-linejoin="round"/>
<g fill="none" stroke="#6a6a78" stroke-width="1" stroke-linejoin="round"><rect x="154.5" y="158" width="9.5" height="10.5"/><path d="M157 160.5h1M160.5 160.5h1M157 163h1M160.5 163h1M157 165.5h1M160.5 165.5h1"/><path d="M267.8 161.5 L273 158 L278.2 161.5 Z M268.2 168.3 H277.8 M269.8 162.5 V167 M272 162.5 V167 M274.2 162.5 V167 M276.3 162.5 V167"/></g>
<g fill="none" stroke="#555562" stroke-width="1.2" stroke-linecap="round" stroke-linejoin="round"><path d="M510 160.5 H520.5 L518.3 158.3M520.5 165 H510 L512.2 167.2"/></g>
<g fill="none" stroke="#8a8a98" stroke-width="1.1"><rect x="164.8" y="190" width="9.5" height="9" rx="1"/><path d="M164.8 192.8H174.3M167.3 188.8v2M171.8 188.8v2"/><rect x="167.10000000000002" y="194.5" width="2" height="2" fill="#8a8a98" stroke="none"/></g>
<path d="M271.0 192.39999999999998 l3.5 3.5 3.5 -3.5" fill="none" stroke="#6a6a7a" stroke-width="1.4" stroke-linecap="round" stroke-linejoin="round"/>
<g fill="none" stroke="#8a8a98" stroke-width="1.1"><rect x="303" y="190" width="9.5" height="9" rx="1"/><path d="M303 192.8H312.5M305.5 188.8v2M310 188.8v2"/><rect x="305.3" y="194.5" width="2" height="2" fill="#8a8a98" stroke="none"/></g>
<path d="M409.5 192.39999999999998 l3.5 3.5 3.5 -3.5" fill="none" stroke="#6a6a7a" stroke-width="1.4" stroke-linecap="round" stroke-linejoin="round"/>
<path d="M502.1 192.39999999999998 l3.5 3.5 3.5 -3.5" fill="none" stroke="#6a6a7a" stroke-width="1.4" stroke-linecap="round" stroke-linejoin="round"/>
<path d="M606.5 192.39999999999998 l3.5 3.5 3.5 -3.5" fill="none" stroke="#6a6a7a" stroke-width="1.4" stroke-linecap="round" stroke-linejoin="round"/>
<path d="M699.5 192.39999999999998 l3.5 3.5 3.5 -3.5" fill="none" stroke="#6a6a7a" stroke-width="1.4" stroke-linecap="round" stroke-linejoin="round"/>
<path d="M784.2 192.39999999999998 l3.5 3.5 3.5 -3.5" fill="none" stroke="#6a6a7a" stroke-width="1.4" stroke-linecap="round" stroke-linejoin="round"/>
<g fill="none" stroke="#7a7a8a" stroke-width="1.3" stroke-linecap="round"><circle cx="829.0" cy="193.5" r="4"/><path d="M832.0 196.5 L834.2 198.7"/></g>
<g fill="none" stroke="#7a7a8a" stroke-width="1.3" stroke-linecap="round"><circle cx="960.2" cy="193.5" r="4"/><path d="M963.2 196.5 L965.4000000000001 198.7"/></g>
<g fill="none" stroke="#7a7a8a" stroke-width="1.3" stroke-linecap="round"><circle cx="1092.1000000000001" cy="193.5" r="4"/><path d="M1095.1000000000001 196.5 L1097.3000000000002 198.7"/></g>
<g fill="none" stroke="#5a48c8" stroke-width=".9"><circle cx="626.3" cy="229.3" r="3.6"/><path d="M626.3 229.10000000000002v2"/></g><circle cx="626.3" cy="227.70000000000002" r=".55" fill="#5a48c8"/>
<g fill="none" stroke="#5a48c8" stroke-width=".9"><circle cx="780.8" cy="229.3" r="3.6"/><path d="M780.8 229.10000000000002v2"/></g><circle cx="780.8" cy="227.70000000000002" r=".55" fill="#5a48c8"/>
<g fill="none" stroke="#6f60d6" stroke-width="1.1"><circle cx="647" cy="247.2" r="9.3"/><circle cx="801.5" cy="247.2" r="9.3"/></g>
<g fill="none" stroke="#5a48c8" stroke-width="1.1" stroke-linecap="round" stroke-linejoin="round"><path d="M646.5 244 H643.5 V250.5 H650 V247.5"/><path d="M646.3 247.8 L650.6 243.5"/><path d="M798.6 245.8 A3.2 3.2 0 0 1 804.3 246.2 M804.4 248.6 A3.2 3.2 0 0 1 798.7 248.2"/><circle cx="798.6" cy="245.6" r=".7" fill="#4f3ec2"/><circle cx="804.4" cy="248.8" r=".7" fill="#4f3ec2"/></g>
<g fill="none" stroke="#6f60d6" stroke-width="1.1" stroke-linecap="round" stroke-linejoin="round"><circle cx="1410.5" cy="327.3" r="12.6"/></g><g fill="none" stroke="#4f3ec2" stroke-width="1.3" stroke-linecap="round" stroke-linejoin="round"><path d="M1410.5 322.8 V329 M1408.2 327 L1410.5 329.3 L1412.8 327 M1406 330.2 V332.6 H1415 V330.2"/></g>
<path d="M222.5 371 L225 367.8 L227.5 371 Z" fill="#5a48d0"/>
<g fill="none" stroke="#4f3ec2" stroke-width="1.6" stroke-linejoin="round"><rect x="1384.2" y="396.1" width="7" height="8.8" rx=".6"/></g><g fill="none" stroke="#4f3ec2" stroke-width="1.1" stroke-linecap="round"><path d="M1388.7 398.6 a1.1 1 0 0 0 -2 .4 c0 1 2 .6 2 1.6 a1.1 1 0 0 1 -2 .4 M1387.7 397.5 v.8 M1387.7 402.7 v.8" stroke-width="1.25"/></g>
<g fill="none" stroke="#4f3ec2" stroke-width="1.5" stroke-linejoin="round"><path d="M1404.8 395.5 H1409.8 L1412.2 397.90000000000003 V405.1 H1404.8 Z"/><path d="M1407.1 399.7 L1408.9 401.90000000000003 L1410.1 400.1" stroke-width="1.2"/></g>
<g fill="none" stroke="#4f3ec2" stroke-width="1.5" stroke-linejoin="round"><path d="M1404.8 428.04 H1409.8 L1412.2 430.44000000000005 V437.64000000000004 H1404.8 Z"/><path d="M1407.1 432.24 L1408.9 434.44000000000005 L1410.1 432.64000000000004" stroke-width="1.2"/></g>
<g fill="none" stroke="#4f3ec2" stroke-width="1.6" stroke-linejoin="round"><rect x="1384.2" y="461.18" width="7" height="8.8" rx=".6"/></g><g fill="none" stroke="#4f3ec2" stroke-width="1.1" stroke-linecap="round"><path d="M1388.7 463.68 a1.1 1 0 0 0 -2 .4 c0 1 2 .6 2 1.6 a1.1 1 0 0 1 -2 .4 M1387.7 462.58 v.8 M1387.7 467.78 v.8" stroke-width="1.25"/></g>
<g fill="none" stroke="#4f3ec2" stroke-width="1.5" stroke-linejoin="round"><path d="M1404.8 460.58 H1409.8 L1412.2 462.98 V470.18 H1404.8 Z"/><path d="M1407.1 464.78 L1408.9 466.98 L1410.1 465.18" stroke-width="1.2"/></g>
<g fill="none" stroke="#4f3ec2" stroke-width="1.5" stroke-linejoin="round"><path d="M1404.8 493.12 H1409.8 L1412.2 495.52000000000004 V502.72 H1404.8 Z"/><path d="M1407.1 497.32 L1408.9 499.52000000000004 L1410.1 497.72" stroke-width="1.2"/></g>
<g fill="none" stroke="#4f3ec2" stroke-width="1.5" stroke-linejoin="round"><path d="M1404.8 525.6600000000001 H1409.8 L1412.2 528.0600000000001 V535.26 H1404.8 Z"/><path d="M1407.1 529.86 L1408.9 532.0600000000001 L1410.1 530.26" stroke-width="1.2"/></g>
<path d="M1408.76 559.06 A2.95 2.95 0 0 1 1412.94 563.24 M1405.06 562.76 A2.95 2.95 0 0 0 1409.24 566.94 M1407.70 564.30 L1410.30 561.70" fill="none" stroke="#4f3ec2" stroke-width="1.5" stroke-linecap="round"/>
<path d="M1408.76 591.60 A2.95 2.95 0 0 1 1412.94 595.78 M1405.06 595.30 A2.95 2.95 0 0 0 1409.24 599.48 M1407.70 596.84 L1410.30 594.24" fill="none" stroke="#4f3ec2" stroke-width="1.5" stroke-linecap="round"/><path d="M1406.2 589.74 v1 M1403 592.8399999999999 h1 M1414.9 598.4399999999999 h-1 M1411.6 601.4399999999999 v-1" fill="none" stroke="#4f3ec2" stroke-width="1.1" stroke-linecap="round"/>
<g fill="none" stroke="#4f3ec2" stroke-width="1.6" stroke-linejoin="round"><rect x="1384.2" y="623.8800000000001" width="7" height="8.8" rx=".6"/></g><g fill="none" stroke="#4f3ec2" stroke-width="1.1" stroke-linecap="round"><path d="M1388.7 626.3800000000001 a1.1 1 0 0 0 -2 .4 c0 1 2 .6 2 1.6 a1.1 1 0 0 1 -2 .4 M1387.7 625.2800000000001 v.8 M1387.7 630.4800000000001 v.8" stroke-width="1.25"/></g>
<path d="M1408.76 624.14 A2.95 2.95 0 0 1 1412.94 628.32 M1405.06 627.84 A2.95 2.95 0 0 0 1409.24 632.02 M1407.70 629.38 L1410.30 626.78" fill="none" stroke="#4f3ec2" stroke-width="1.5" stroke-linecap="round"/><path d="M1406.2 622.2800000000001 v1 M1403 625.38 h1 M1414.9 630.98 h-1 M1411.6 633.98 v-1" fill="none" stroke="#4f3ec2" stroke-width="1.1" stroke-linecap="round"/>
<g fill="none" stroke="#4f3ec2" stroke-width="1.6" stroke-linejoin="round"><rect x="1384.2" y="656.4200000000001" width="7" height="8.8" rx=".6"/></g><g fill="none" stroke="#4f3ec2" stroke-width="1.1" stroke-linecap="round"><path d="M1388.7 658.9200000000001 a1.1 1 0 0 0 -2 .4 c0 1 2 .6 2 1.6 a1.1 1 0 0 1 -2 .4 M1387.7 657.82 v.8 M1387.7 663.0200000000001 v.8" stroke-width="1.25"/></g>
<path d="M1408.76 656.68 A2.95 2.95 0 0 1 1412.94 660.86 M1405.06 660.38 A2.95 2.95 0 0 0 1409.24 664.56 M1407.70 661.92 L1410.30 659.32" fill="none" stroke="#4f3ec2" stroke-width="1.5" stroke-linecap="round"/><path d="M1406.2 654.82 v1 M1403 657.92 h1 M1414.9 663.52 h-1 M1411.6 666.52 v-1" fill="none" stroke="#4f3ec2" stroke-width="1.1" stroke-linecap="round"/>
<g fill="none" stroke="#4f3ec2" stroke-width="1.6" stroke-linejoin="round"><rect x="1384.2" y="688.9600000000002" width="7" height="8.8" rx=".6"/></g><g fill="none" stroke="#4f3ec2" stroke-width="1.1" stroke-linecap="round"><path d="M1388.7 691.4600000000002 a1.1 1 0 0 0 -2 .4 c0 1 2 .6 2 1.6 a1.1 1 0 0 1 -2 .4 M1387.7 690.3600000000001 v.8 M1387.7 695.5600000000002 v.8" stroke-width="1.25"/></g>
<path d="M1408.76 689.22 A2.95 2.95 0 0 1 1412.94 693.40 M1405.06 692.92 A2.95 2.95 0 0 0 1409.24 697.10 M1407.70 694.46 L1410.30 691.86" fill="none" stroke="#4f3ec2" stroke-width="1.5" stroke-linecap="round"/><path d="M1406.2 687.3600000000001 v1 M1403 690.46 h1 M1414.9 696.0600000000001 h-1 M1411.6 699.0600000000001 v-1" fill="none" stroke="#4f3ec2" stroke-width="1.1" stroke-linecap="round"/>
<path d="M1408.76 721.76 A2.95 2.95 0 0 1 1412.94 725.94 M1405.06 725.46 A2.95 2.95 0 0 0 1409.24 729.64 M1407.70 727.00 L1410.30 724.40" fill="none" stroke="#4f3ec2" stroke-width="1.5" stroke-linecap="round"/><path d="M1406.2 719.9000000000001 v1 M1403 723.0 h1 M1414.9 728.6 h-1 M1411.6 731.6 v-1" fill="none" stroke="#4f3ec2" stroke-width="1.1" stroke-linecap="round"/>
<g fill="none" stroke="#4f3ec2" stroke-width="1.6" stroke-linejoin="round"><rect x="1384.2" y="754.0400000000001" width="7" height="8.8" rx=".6"/></g><g fill="none" stroke="#4f3ec2" stroke-width="1.1" stroke-linecap="round"><path d="M1388.7 756.5400000000001 a1.1 1 0 0 0 -2 .4 c0 1 2 .6 2 1.6 a1.1 1 0 0 1 -2 .4 M1387.7 755.44 v.8 M1387.7 760.6400000000001 v.8" stroke-width="1.25"/></g>
<path d="M1408.76 754.30 A2.95 2.95 0 0 1 1412.94 758.48 M1405.06 758.00 A2.95 2.95 0 0 0 1409.24 762.18 M1407.70 759.54 L1410.30 756.94" fill="none" stroke="#4f3ec2" stroke-width="1.5" stroke-linecap="round"/><path d="M1406.2 752.44 v1 M1403 755.54 h1 M1414.9 761.14 h-1 M1411.6 764.14 v-1" fill="none" stroke="#4f3ec2" stroke-width="1.1" stroke-linecap="round"/>
<path d="M1408.76 786.84 A2.95 2.95 0 0 1 1412.94 791.02 M1405.06 790.54 A2.95 2.95 0 0 0 1409.24 794.72 M1407.70 792.08 L1410.30 789.48" fill="none" stroke="#4f3ec2" stroke-width="1.5" stroke-linecap="round"/><path d="M1406.2 784.98 v1 M1403 788.0799999999999 h1 M1414.9 793.68 h-1 M1411.6 796.68 v-1" fill="none" stroke="#4f3ec2" stroke-width="1.1" stroke-linecap="round"/></svg>
</body></html>
